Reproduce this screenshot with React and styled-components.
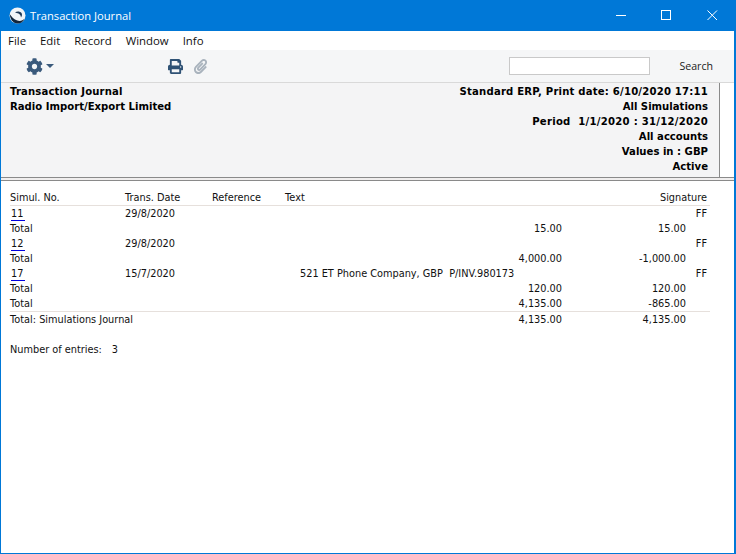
import styled, { createGlobalStyle } from "styled-components";
import { FaPrint, FaCog, FaPaperclip } from "react-icons/fa";

const GlobalStyle = createGlobalStyle`
    html, body {
        margin: 0;
        padding: 0;
        background: #ffffff;
    }
    body {
        font-family: "DejaVu Sans", Verdana, sans-serif;
        font-size: 9.75px;
        color: #111111;
    }
`;

const Window = styled.div`
    width: 736px;
    height: 554px;
    box-sizing: border-box;
    display: flex;
    flex-direction: column;
    border: 1px solid #0078d7;
    border-right-width: 2px;
    background: #ffffff;
    overflow: hidden;
`;

const TitleBar = styled.div`
    height: 30px;
    flex: none;
    box-sizing: border-box;
    display: flex;
    align-items: center;
    background: #0078d7;
    color: #ffffff;
    padding: 0 0 2px 8px;
`;

const Title = styled.div`
    font-family: "Open Sans", sans-serif;
    font-size: 11.2px;
    margin-left: 4px;
    flex: 1;
`;

const WinButton = styled.div`
    width: 46px;
    height: 28px;
    box-sizing: border-box;
    padding-left: 2px;
    display: flex;
    align-items: center;
    justify-content: center;
`;

const MenuBar = styled.div`
    height: 19px;
    flex: none;
    display: flex;
    align-items: center;
    gap: 14px;
    padding-left: 7px;
    font-family: "Open Sans", sans-serif;
    font-size: 11.4px;
    color: #111111;
`;

const Toolbar = styled.div`
    height: 33px;
    flex: none;
    box-sizing: border-box;
    display: flex;
    align-items: center;
    background: #f5f6f7;
    border-bottom: 1px solid #d9d9d9;
`;

const GearWrap = styled.div`
    display: flex;
    align-items: center;
    gap: 3px;
    margin-left: 25px;
    color: #3a5a7c;
`;

const Caret = styled.div`
    width: 0;
    height: 0;
    border-left: 4px solid transparent;
    border-right: 4px solid transparent;
    border-top: 4px solid #3a5a7c;
`;

const PrintButton = styled.div`
    display: flex;
    margin-left: 114px;
    color: #2f5275;
`;

const ClipButton = styled.div`
    display: flex;
    margin-left: 10px;
    color: #a9b3bd;
`;

const SearchInput = styled.div`
    width: 141px;
    height: 18px;
    box-sizing: border-box;
    margin-left: auto;
    margin-right: 29px;
    background: #ffffff;
    border: 1px solid #c9c9c9;
`;

const SearchLabel = styled.div`
    font-family: "Open Sans", sans-serif;
    font-size: 10.6px;
    margin-right: 21px;
    color: #222222;
`;

const ReportHeader = styled.div`
    height: 94px;
    flex: none;
    box-sizing: border-box;
    display: flex;
    justify-content: space-between;
    width: 719px;
    background: #f4f4f5;
    border-right: 1px solid #8a8a8a;
    padding: 1px 11px 0 9px;
    font-size: 10.1px;
    font-weight: 700;
    line-height: 15px;
    color: #000000;
`;

const HeaderRight = styled.div`
    text-align: right;
`;

const HeaderLine = styled.div`
    letter-spacing: ${(p) => p.$track || "0"};
`;

const Divider = styled.div`
    height: 4px;
    flex: none;
    box-sizing: border-box;
    background: #f0eeee;
    border-top: 1px solid #8a8a8a;
    border-bottom: 1px solid #8a8a8a;
`;

const Report = styled.div`
    flex: 1;
    padding: 9px 0 0 9px;
    line-height: 15px;
`;

const Row = styled.div`
    display: grid;
    box-sizing: border-box;
    grid-template-columns: 115px 87px 73px 185px 92px 124px 21px;
    width: 700px;
    height: ${(p) => (p.$ruled ? "16px" : "15px")};
    white-space: pre;
    ${(p) => p.$ruled && "border-bottom: 1px solid #e6e0dc;"}
`;

const Cell = styled.div`
    grid-column: ${(p) => p.$col};
    text-align: ${(p) => (p.$right ? "right" : "left")};
    ${(p) => p.$indent && "padding-left: 15px;"}
`;

const SimLink = styled.span`
    display: inline-block;
    margin-left: 1px;
    border-bottom: 1px solid #0000e0;
    line-height: 12px;
    padding-right: 2px;
`;

const Entries = styled.div`
    margin-top: 15px;
    display: flex;
    gap: 10px;
`;

const AppIcon = () => (
    <svg width="17" height="17" viewBox="0 0 17 17">
        <circle cx="8.5" cy="8.5" r="8" fill="#f2f5f8" />
        <path d="M0.700 7C1 12 4 16.500 8.500 16.500c3.500 0 6-2 7.300-5-2 2.200-5 3-7.500 2C5 12.300 2.500 10 0.700 7z" fill="#12263c" />
        <path d="M6 5.500c2-1.500 5-1.200 6.500.5.800 1.200.6 3-.5 4.500-.2-2-1-3.300-2.500-4-1.200-.5-2.500-.6-3.500-1z" fill="#1f3a58" />
    </svg>
);

const rows = [
    { no: "11", date: "29/8/2020", debit: "15.00", credit: "15.00" },
    { no: "12", date: "29/8/2020", debit: "4,000.00", credit: "-1,000.00" },
    { no: "17", date: "15/7/2020", text: "521 ET Phone Company, GBP  P/INV.980173", debit: "120.00", credit: "120.00" },
];

const App = () => {
    return (
        <Window>
            <GlobalStyle />
            <TitleBar>
                <AppIcon />
                <Title>Transaction Journal</Title>
                <WinButton>
                    <svg width="11" height="11" viewBox="0 0 11 11">
                        <path d="M1 5.500h10" stroke="#fff" />
                    </svg>
                </WinButton>
                <WinButton>
                    <svg width="11" height="11" viewBox="0 0 11 11">
                        <rect x="0.500" y="0.500" width="9" height="9" fill="none" stroke="#fff" />
                    </svg>
                </WinButton>
                <WinButton>
                    <svg width="11" height="11" viewBox="0 0 11 11">
                        <path d="M0.500 0.500l9.500 9.500M10 0.500l-9.500 9.500" stroke="#fff" />
                    </svg>
                </WinButton>
            </TitleBar>
            <MenuBar>
                <span>File</span>
                <span>Edit</span>
                <span>Record</span>
                <span>Window</span>
                <span>Info</span>
            </MenuBar>
            <Toolbar>
                <GearWrap>
                    <FaCog size={17} />
                    <Caret />
                </GearWrap>
                <PrintButton>
                    <FaPrint size={15} />
                </PrintButton>
                <ClipButton>
                    <FaPaperclip size={15} />
                </ClipButton>
                <SearchInput />
                <SearchLabel>Search</SearchLabel>
            </Toolbar>
            <ReportHeader>
                <div>
                    <HeaderLine $track="0.15px">Transaction Journal</HeaderLine>
                    <HeaderLine>Radio Import/Export Limited</HeaderLine>
                </div>
                <HeaderRight>
                    <HeaderLine $track="0.2px">Standard ERP, Print date: 6/10/2020 17:11</HeaderLine>
                    <HeaderLine>All Simulations</HeaderLine>
                    <HeaderLine $track="0.27px">Period&nbsp; 1/1/2020 : 31/12/2020</HeaderLine>
                    <HeaderLine>All accounts</HeaderLine>
                    <HeaderLine>Values in : GBP</HeaderLine>
                    <HeaderLine>Active</HeaderLine>
                </HeaderRight>
            </ReportHeader>
            <Divider />
            <Report>
                <Row $ruled>
                    <Cell $col="1">Simul. No.</Cell>
                    <Cell $col="2">Trans. Date</Cell>
                    <Cell $col="3">Reference</Cell>
                    <Cell $col="4">Text</Cell>
                    <Cell $col="6 / 8" $right>Signature</Cell>
                </Row>
                {rows.map((r) => (
                    <div key={r.no}>
                        <Row>
                            <Cell $col="1"><SimLink>{r.no}</SimLink></Cell>
                            <Cell $col="2">{r.date}</Cell>
                            {r.text && <Cell $col="4" $indent>{r.text}</Cell>}
                            <Cell $col="7" $right>FF</Cell>
                        </Row>
                        <Row>
                            <Cell $col="1">Total</Cell>
                            <Cell $col="5" $right>{r.debit}</Cell>
                            <Cell $col="6" $right>{r.credit}</Cell>
                        </Row>
                    </div>
                ))}
                <Row $ruled>
                    <Cell $col="1">Total</Cell>
                    <Cell $col="5" $right>4,135.00</Cell>
                    <Cell $col="6" $right>-865.00</Cell>
                </Row>
                <Row>
                    <Cell $col="1 / 4">Total: Simulations Journal</Cell>
                    <Cell $col="5" $right>4,135.00</Cell>
                    <Cell $col="6" $right>4,135.00</Cell>
                </Row>
                <Entries>
                    <span>Number of entries:</span>
                    <span>3</span>
                </Entries>
            </Report>
        </Window>
    );
};

export default App;
